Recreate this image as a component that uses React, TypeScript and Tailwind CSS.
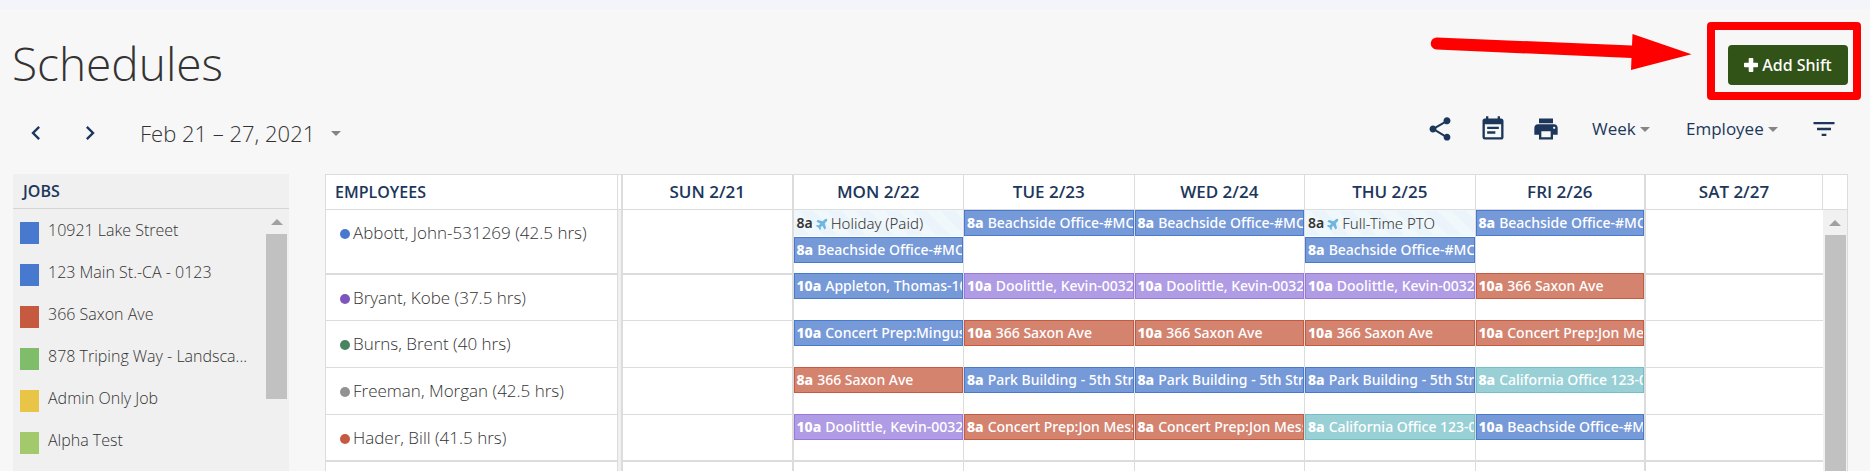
import {
  MdChevronLeft,
  MdChevronRight,
  MdEventNote,
  MdFilterList,
  MdPrint,
  MdShare,
} from "react-icons/md";
import { FaPlane } from "react-icons/fa";
import clsx from "clsx";

type Tone = "blue" | "purple" | "red" | "teal" | "pto";

type Shift = {
  time: string;
  label: string;
  tone: Tone;
};

const tones: Record<Tone, string> = {
  blue: "border-[#4779cf] bg-[#7699d8] text-white",
  purple: "border-[#9878de] bg-[#b09be5] text-white",
  red: "border-[#c65a41] bg-[#d4836f] text-white",
  teal: "border-[#73bfc7] bg-[#99d0d6] text-white",
  pto: "border-[#eff7fc] bg-[repeating-linear-gradient(45deg,#eaf4fa_0px,#eaf4fa_10px,#f1f8fc_10px,#f1f8fc_20px)] text-[#333333]",
};

const s = (time: string, label: string, tone: Tone): Shift => ({ time, label, tone });

const beachside = s("8a", "Beachside Office-#MC", "blue");
const doolittle = s("10a", "Doolittle, Kevin-0032", "purple");
const park = s("8a", "Park Building - 5th Str", "blue");
const california = s("8a", "California Office 123-0", "teal");
const saxon = s("10a", "366 Saxon Ave", "red");
const concert = s("8a", "Concert Prep:Jon Mess", "red");

const jobs = [
  { name: "10921 Lake Street", color: "bg-[#4779cf]" },
  { name: "123 Main St.-CA - 0123", color: "bg-[#4779cf]" },
  { name: "366 Saxon Ave", color: "bg-[#c65a41]" },
  { name: "878 Triping Way - Landsca...", color: "bg-[#7fbd6a]" },
  { name: "Admin Only Job", color: "bg-[#e8c447]" },
  { name: "Alpha Test", color: "bg-[#a2c96c]" },
];

const days = [
  "SUN 2/21",
  "MON 2/22",
  "TUE 2/23",
  "WED 2/24",
  "THU 2/25",
  "FRI 2/26",
  "SAT 2/27",
];

const employees: { name: string; dot: string; thick?: boolean; week: Shift[][] }[] = [
  {
    name: "Abbott, John-531269 (42.5 hrs)",
    dot: "bg-[#4779cf]",
    thick: true,
    week: [
      [],
      [s("8a", "Holiday (Paid)", "pto"), beachside],
      [beachside],
      [beachside],
      [s("8a", "Full-Time PTO", "pto"), beachside],
      [beachside],
      [],
    ],
  },
  {
    name: "Bryant, Kobe (37.5 hrs)",
    dot: "bg-[#7d55bb]",
    week: [
      [],
      [s("10a", "Appleton, Thomas-10", "blue")],
      [doolittle],
      [doolittle],
      [doolittle],
      [saxon],
      [],
    ],
  },
  {
    name: "Burns, Brent (40 hrs)",
    dot: "bg-[#47855f]",
    week: [
      [],
      [s("10a", "Concert Prep:Mingus", "blue")],
      [saxon],
      [saxon],
      [saxon],
      [s("10a", "Concert Prep:Jon Me", "red")],
      [],
    ],
  },
  {
    name: "Freeman, Morgan (42.5 hrs)",
    dot: "bg-[#929292]",
    week: [[], [s("8a", "366 Saxon Ave", "red")], [park], [park], [park], [california], []],
  },
  {
    name: "Hader, Bill (41.5 hrs)",
    dot: "bg-[#c65a41]",
    thick: true,
    week: [
      [],
      [doolittle],
      [concert],
      [concert],
      [california],
      [s("10a", "Beachside Office-#M", "blue")],
      [],
    ],
  },
];

function Caret() {
  return (
    <svg viewBox="0 0 10 5" className="pointer-events-none h-[5px] w-[10px] shrink-0 fill-[#858585]">
      <path d="M0 0h10L5 5z" />
    </svg>
  );
}

function ScrollBar({ thumb }: { thumb: string }) {
  return (
    <div className="flex h-full flex-col items-center">
      <div className="flex h-[25px] shrink-0 items-center">
        <svg viewBox="0 0 12 6" className="h-[6px] w-[12px] fill-[#a0a0a0]">
          <path d="M6 0l6 6H0z" />
        </svg>
      </div>
      <div className={clsx("w-[21px] bg-[#c1c1c1]", thumb)} />
    </div>
  );
}

function ShiftBar({ shift }: { shift: Shift }) {
  const pto = shift.tone === "pto";

  return (
    <div
      className={clsx(
        "flex h-[26px] items-center overflow-hidden border px-[2px] font-['Noto_Sans',sans-serif] text-sm leading-5 whitespace-nowrap",
        tones[shift.tone]
      )}
    >
      <span className={pto ? "font-semibold" : "font-extrabold"}>{shift.time}</span>
      {pto && <FaPlane className="ml-[3px] size-[13px] shrink-0 -rotate-45 text-[#6fb6e0]" />}
      <span className={pto ? "ml-[2px] text-[15px] font-light" : "ml-1 font-medium"}>
        {shift.label}
      </span>
    </div>
  );
}

function ViewSelect({ label, value }: { label: string; value: string }) {
  return (
    <div className="flex items-center gap-1">
      <select
        aria-label={label}
        defaultValue={value}
        className="appearance-none bg-transparent text-[17px] leading-6 text-[#1c375b]"
      >
        <option>{value}</option>
      </select>
      <Caret />
    </div>
  );
}

export default function App() {
  return (
    <div className="flex h-screen flex-col overflow-hidden bg-[#f7f7f7] font-['Open_Sans',sans-serif] text-[#333333]">
      <div className="h-[9px] shrink-0 bg-[#f3f5fa]" />

      {/* Title and primary action */}
      <header className="relative flex h-[90px] shrink-0 items-start justify-between pr-[22px] pl-3">
        <h1 className="mt-5 text-[46px] leading-[68px] font-light">
          Schedules
        </h1>

        <div className="relative mt-9">
          <button className="flex h-10 w-[120px] items-center justify-center gap-1 rounded bg-[#325317] font-['Noto_Sans',sans-serif] text-base font-medium text-white">
            <svg viewBox="0 0 14 14" className="size-[14px] fill-white">
              <path d="M5.5 0h3q.8 0 .8.8v3.9h3.9q.8 0 .8.8v3q0 .8-.8.8H9.3v3.9q0 .8-.8.8h-3q-.8 0-.8-.8V9.3H.8q-.8 0-.8-.8v-3q0-.8.8-.8h3.9V.8q0-.8.8-.8z" />
            </svg>
            Add Shift
          </button>

          {/* Callout box and arrow */}
          <div className="pointer-events-none absolute -top-[23px] -left-[21px] h-[78px] w-[154px] rounded-[4px] border-8 border-[#ff0000]" />
          <svg
            viewBox="0 0 262 40"
            className="pointer-events-none absolute -top-[12px] right-[156px] h-[40px] w-[262px] fill-[#ff0000]"
          >
            <path d="M7 4.500L202 12.500L202.500 1L261.500 21.300L201 37L201.500 25L6.500 16.500A6 6 0 0 1 7 4.500z" />
          </svg>
        </div>
      </header>

      {/* Date range and view controls */}
      <div className="flex h-[75px] shrink-0 items-start justify-between pr-8 pl-[22px]">
        <div className="flex items-center pt-[18px]">
          <button aria-label="Previous week" className="text-[#1c375b]">
            <MdChevronLeft className="size-7" />
          </button>
          <button aria-label="Next week" className="ml-[26px] text-[#1c375b]">
            <MdChevronRight className="size-7" />
          </button>
          <button className="ml-9 flex items-center gap-4 text-[22px] leading-8 font-light">
            Feb 21 – 27, 2021
            <Caret />
          </button>
        </div>

        <div className="flex items-center pt-4 text-[#1c375b]">
          <div className="mr-8 flex gap-[25px]">
            <button aria-label="Share">
              <MdShare className="size-7" />
            </button>
            <button aria-label="Events">
              <MdEventNote className="size-7" />
            </button>
            <button aria-label="Print">
              <MdPrint className="size-7" />
            </button>
          </div>
          <div className="mr-8 flex gap-9">
            <ViewSelect label="Range" value="Week" />
            <ViewSelect label="Group by" value="Employee" />
          </div>
          <button aria-label="Filter">
            <MdFilterList className="size-7" />
          </button>
        </div>
      </div>

      <main className="flex min-h-0 grow items-stretch pr-[22px] pl-[13px]">
        {/* Jobs */}
        <aside className="flex w-[276px] shrink-0 flex-col bg-[#f0f0f0]">
          <h2 className="h-[35px] shrink-0 border-b border-[#d5d5d5] pl-[10px] text-base leading-[35px] font-semibold text-[#1c375b]">
            JOBS
          </h2>
          <div className="flex min-h-0 grow">
            <ul className="min-w-0 grow pl-[7px]">
              {jobs.map((job) => (
                <li key={job.name} className="flex h-[42px] items-start gap-[9px]">
                  <span className={clsx("mt-[13px] h-[22px] w-[19px] shrink-0", job.color)} />
                  <span className="mt-[9px] text-base leading-6 font-light whitespace-nowrap">
                    {job.name}
                  </span>
                </li>
              ))}
            </ul>
            <div className="mr-[2px] w-[21px]">
              <ScrollBar thumb="h-[165px]" />
            </div>
          </div>
        </aside>

        {/* Schedule grid */}
        <div className="ml-9 min-w-0 grow border border-b-0 border-[#dcdcdc] bg-white">
          <table className="w-full table-fixed border-separate border-spacing-0">
            <colgroup>
              <col className="w-[297px]" />
              <col />
              <col />
              <col />
              <col />
              <col />
              <col />
              <col className="w-[177px]" />
              <col className="w-[24px]" />
            </colgroup>
            <thead>
              <tr className="h-[35px] text-[17px] leading-6 text-[#1c375b]">
                <th className="border-r-2 border-b border-[#dcdcdc] p-0 text-left font-semibold">
                  <div className="mr-[3px] h-[34px] border-r border-[#dcdcdc] pl-[9px] text-base leading-[34px]">
                    EMPLOYEES
                  </div>
                </th>
                {days.map((day, i) => (
                  <th
                    key={day}
                    className={clsx(
                      "border-b border-[#dcdcdc] p-0 font-semibold",
                      i === 0 || i === 5 ? "border-r-2" : "border-r"
                    )}
                  >
                    {day}
                  </th>
                ))}
                <th className="border-b border-[#dcdcdc] p-0" />
              </tr>
            </thead>
            <tbody>
              {employees.map((employee, row) => (
                <tr
                  key={employee.name}
                  className={row === 0 ? "h-[65px]" : row === 1 ? "h-[46px]" : "h-[47px]"}
                >
                  <td className="h-[inherit] border-r-2 border-[#dcdcdc] bg-[#f0f0f0] p-0 align-top">
                    <div
                      className={clsx(
                        "mr-[3px] flex h-[inherit] items-start gap-[3px] border-r border-[#dcdcdc] bg-white pt-[11px] pl-[14px]",
                        employee.thick ? "border-b-2" : "border-b"
                      )}
                    >
                      <span className={clsx("mt-2 size-[10px] rounded-full", employee.dot)} />
                      <span className="text-[17px] leading-6 font-light">{employee.name}</span>
                    </div>
                  </td>
                  {employee.week.map((shifts, i) => (
                    <td
                      key={i}
                      className={clsx(
                        "border-[#dcdcdc] p-0 align-top",
                        i === 6 ? "" : i === 0 || i === 5 ? "border-r-2" : "border-r",
                        employee.thick ? "border-b-2" : "border-b"
                      )}
                    >
                      <div
                        className={clsx(
                          "relative flex flex-col gap-px",
                          row === 1 ? "-mt-[2px]" : row > 1 && "-mt-px"
                        )}
                      >
                        {shifts.map((shift, n) => (
                          <ShiftBar key={n} shift={shift} />
                        ))}
                      </div>
                    </td>
                  ))}
                  {row === 0 && (
                    <td rowSpan={6} className="bg-[#f1f1f1] p-0 align-top">
                      <ScrollBar thumb="h-[260px]" />
                    </td>
                  )}
                </tr>
              ))}
              <tr className="h-[47px]">
                <td className="h-[inherit] border-r-2 border-[#dcdcdc] bg-[#f0f0f0] p-0">
                  <div className="mr-[3px] h-[inherit] border-r border-[#dcdcdc] bg-white" />
                </td>
                {days.map((day, i) => (
                  <td
                    key={day}
                    className={clsx(
                      "border-[#dcdcdc] p-0",
                      i === 6 ? "" : i === 0 || i === 5 ? "border-r-2" : "border-r"
                    )}
                  />
                ))}
              </tr>
            </tbody>
          </table>
        </div>
      </main>
    </div>
  );
}
